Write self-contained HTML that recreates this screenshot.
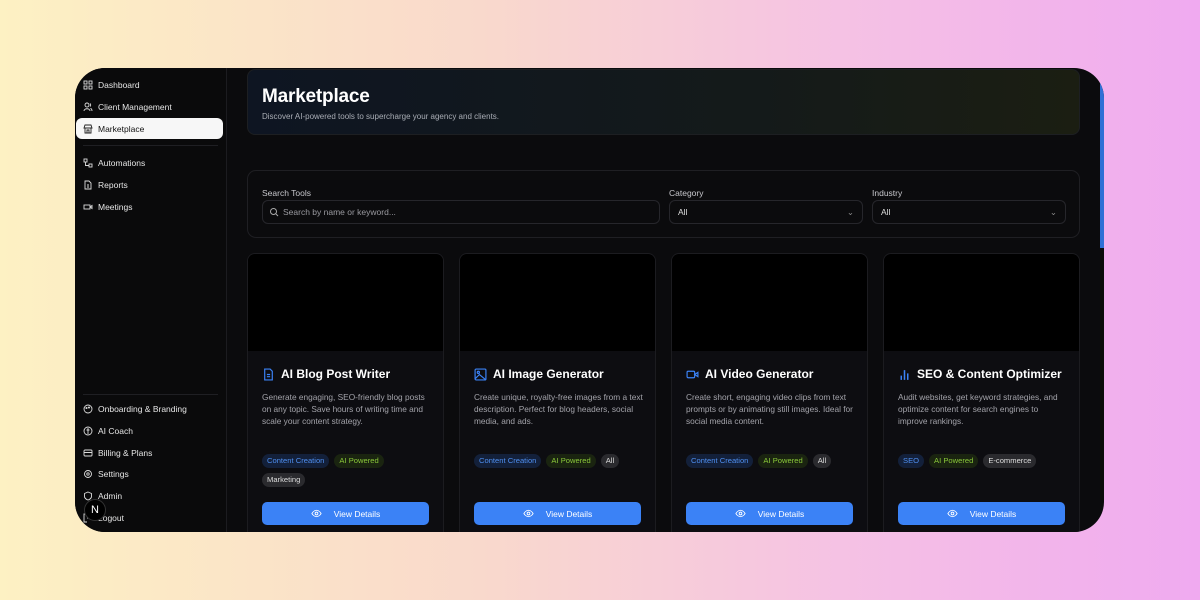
<!DOCTYPE html>
<html><head><style>
*{box-sizing:border-box;margin:0;padding:0}
body{width:1200px;height:600px;overflow:hidden;font-family:"Liberation Sans",sans-serif;background:linear-gradient(90deg,#fdf1c3 0%,#f9d9cc 40%,#f5c2e4 70%,#f0aaf0 100%);position:relative}
.win{position:absolute;left:75px;top:68px;width:1029px;height:464px;border-radius:30px;overflow:hidden;background:#0b0b0d}
.side{position:absolute;left:0;top:0;width:152px;height:464px;background:#0a0a0b;border-right:1px solid #1c1c20}
.nav{position:absolute;left:8px;font-size:8.5px;color:#e6e6e6;display:flex;align-items:center;gap:5px;height:16px}
.nav svg{width:10px;height:10px;stroke:#ddd;fill:none;stroke-width:0.9}
.act{position:absolute;left:1px;top:50px;width:147px;height:21px;background:#f7f7f7;border-radius:6px}
.sep{position:absolute;left:8px;width:135px;height:1px;background:#1f1f23}
.main{position:absolute;left:152px;top:0;right:0;height:464px}
.hdr{position:absolute;left:20px;top:1px;width:833px;height:66px;border-radius:8px;border:1px solid #1d1f22;background:linear-gradient(90deg,#0e1522,#141a1a 60%,#1b1e12)}
.hdr h1{position:absolute;left:14px;top:16px;font-size:19px;color:#fff;font-weight:bold;letter-spacing:-0.2px}
.hdr p{position:absolute;left:14px;top:42px;font-size:8px;color:#a9adb5}
.flt{position:absolute;left:20px;top:102px;width:833px;height:68px;border-radius:9px;border:1px solid #1f1f23}
.lbl{position:absolute;top:17px;font-size:8.5px;color:#c7c7cc}
.inp{position:absolute;top:29px;height:24px;border:1px solid #26262b;border-radius:6px;font-size:8.5px;color:#ddd;padding-left:8px;line-height:22px}
.card{position:absolute;top:185px;width:197px;height:290px;border:1px solid #1c1c20;border-radius:8px;background:#0d0d11;overflow:hidden}
.img{height:97px;background:#000}
.ttl{position:absolute;left:14px;top:113px;font-size:12px;font-weight:bold;color:#fff;display:flex;align-items:center;gap:6px;white-space:nowrap}
.ttl svg{width:13px;height:13px;stroke:#3b82f6;fill:none;stroke-width:1.1}
.dsc{position:absolute;left:14px;top:137px;width:171px;font-size:8.3px;line-height:12px;color:#a3a3aa}
.tags{position:absolute;left:14px;top:200px;width:160px;display:flex;flex-wrap:wrap;gap:5px 5px}
.tag{font-size:7.6px;padding:3px 5px;border-radius:8px;height:14px;line-height:8px}
.tb{background:#13203a;color:#4f8ff0}.tg{background:#1a2410;color:#8ac83a}.tw{background:#2a2a2e;color:#ddd}
.btn{position:absolute;left:14px;top:248px;width:167px;height:23px;border-radius:5px;background:#3b82f6;color:#fff;font-size:8.5px;display:flex;align-items:center;justify-content:center;gap:12px}
.btn svg{width:11px;height:11px;stroke:#fff;fill:none;stroke-width:1}
.scroll{position:absolute;right:0;top:12px;width:4px;height:168px;background:#2f6fd6}
</style></head><body>
<div class="win">
<div class="side">
<div class="act"></div>
<div class="nav" style="top:9px"><svg viewBox="0 0 10 10"><rect x="1" y="1" width="3" height="3"/><rect x="6" y="1" width="3" height="3"/><rect x="1" y="6" width="3" height="3"/><rect x="6" y="6" width="3" height="3"/></svg>Dashboard</div>
<div class="nav" style="top:31px"><svg viewBox="0 0 10 10"><circle cx="4" cy="3" r="2"/><path d="M1 9c0-3 6-3 6 0M7 1.5a2 2 0 010 3M9 9c0-2-1-2.5-1.5-2.7"/></svg>Client Management</div>
<div class="nav" style="top:53px;color:#111"><svg viewBox="0 0 10 10" style="stroke:#222"><path d="M1 4l1-3h6l1 3H1zM2 4v5h6V4M4 9V6h2v3"/></svg>Marketplace</div>
<div class="sep" style="top:77px"></div>
<div class="nav" style="top:87px"><svg viewBox="0 0 10 10"><rect x="1" y="1" width="3" height="3"/><rect x="6" y="6" width="3" height="3"/><path d="M2.5 4v3.5H6"/></svg>Automations</div>
<div class="nav" style="top:109px"><svg viewBox="0 0 10 10"><path d="M2 1h4l2 2v6H2z M4 5h2M4 7h2"/></svg>Reports</div>
<div class="nav" style="top:131px"><svg viewBox="0 0 10 10"><rect x="1" y="3" width="6" height="4"/><path d="M7 5l2-1.5v3z"/></svg>Meetings</div>
<div class="sep" style="top:326px"></div>
<div class="nav" style="top:333px"><svg viewBox="0 0 10 10"><circle cx="5" cy="5" r="4"/><circle cx="3.5" cy="4" r=".6"/><circle cx="6" cy="3.5" r=".6"/></svg>Onboarding &amp; Branding</div>
<div class="nav" style="top:355px"><svg viewBox="0 0 10 10"><circle cx="5" cy="5" r="4"/><path d="M5 2v6M3.5 4h3"/></svg>AI Coach</div>
<div class="nav" style="top:377px"><svg viewBox="0 0 10 10"><rect x="1" y="2" width="8" height="6" rx="1"/><path d="M1 4.5h8"/></svg>Billing &amp; Plans</div>
<div class="nav" style="top:398px"><svg viewBox="0 0 10 10"><circle cx="5" cy="5" r="3.5"/><circle cx="5" cy="5" r="1.2"/></svg>Settings</div>
<div class="nav" style="top:420px"><svg viewBox="0 0 10 10"><path d="M5 1l3.5 1.5v3C8.5 8 5 9 5 9S1.5 8 1.5 5.5v-3z"/></svg>Admin</div>
<div class="nav" style="top:442px"><svg viewBox="0 0 10 10"><path d="M4 1H1v8h3M4 5h5"/></svg>Logout</div>
<div style="position:absolute;left:9px;top:431px;width:22px;height:22px;border-radius:50%;background:#000;border:1px solid #333;color:#fff;font-size:11px;text-align:center;line-height:20px">N</div>
</div>
<div class="main">
<div class="hdr"><h1>Marketplace</h1><p>Discover AI-powered tools to supercharge your agency and clients.</p></div>
<div class="flt">
<div class="lbl" style="left:14px">Search Tools</div>
<div class="inp" style="left:14px;width:398px;padding-left:20px;color:#9a9aa0"><svg viewBox="0 0 10 10" style="position:absolute;left:6px;top:6px;width:10px;height:10px;stroke:#aaa;fill:none;stroke-width:1"><circle cx="4.5" cy="4.5" r="3"/><path d="M7 7l2 2"/></svg>Search by name or keyword...</div>
<div class="lbl" style="left:421px">Category</div>
<div class="inp" style="left:421px;width:194px">All<span style="position:absolute;right:8px;color:#888">⌄</span></div>
<div class="lbl" style="left:624px">Industry</div>
<div class="inp" style="left:624px;width:194px">All<span style="position:absolute;right:8px;color:#888">⌄</span></div>
</div>

<div class="card" style="left:20px"><div class="img"></div>
<div class="ttl"><svg viewBox="0 0 12 12"><path d="M2.5 1h5l2 2v8h-7z M4.5 6h3M4.5 8h3"/></svg>AI Blog Post Writer</div>
<div class="dsc">Generate engaging, SEO-friendly blog posts on any topic. Save hours of writing time and scale your content strategy.</div>
<div class="tags"><span class="tag tb">Content Creation</span><span class="tag tg">AI Powered</span><span class="tag tw">Marketing</span></div>
<div class="btn"><svg viewBox="0 0 12 12"><path d="M1 6s2-3.5 5-3.5S11 6 11 6 9 9.5 6 9.5 1 6 1 6z"/><circle cx="6" cy="6" r="1.5"/></svg>View Details</div></div>

<div class="card" style="left:232px"><div class="img"></div>
<div class="ttl"><svg viewBox="0 0 12 12"><rect x="1" y="1" width="10" height="10" rx="1"/><circle cx="4" cy="4" r="1"/><path d="M1 10l4-4 6 5"/></svg>AI Image Generator</div>
<div class="dsc">Create unique, royalty-free images from a text description. Perfect for blog headers, social media, and ads.</div>
<div class="tags"><span class="tag tb">Content Creation</span><span class="tag tg">AI Powered</span><span class="tag tw">All</span></div>
<div class="btn"><svg viewBox="0 0 12 12"><path d="M1 6s2-3.5 5-3.5S11 6 11 6 9 9.5 6 9.5 1 6 1 6z"/><circle cx="6" cy="6" r="1.5"/></svg>View Details</div></div>

<div class="card" style="left:444px"><div class="img"></div>
<div class="ttl"><svg viewBox="0 0 12 12"><rect x="1" y="3" width="7" height="6" rx="1"/><path d="M8 6l3-2v4z"/></svg>AI Video Generator</div>
<div class="dsc">Create short, engaging video clips from text prompts or by animating still images. Ideal for social media content.</div>
<div class="tags"><span class="tag tb">Content Creation</span><span class="tag tg">AI Powered</span><span class="tag tw">All</span></div>
<div class="btn"><svg viewBox="0 0 12 12"><path d="M1 6s2-3.5 5-3.5S11 6 11 6 9 9.5 6 9.5 1 6 1 6z"/><circle cx="6" cy="6" r="1.5"/></svg>View Details</div></div>

<div class="card" style="left:656px"><div class="img"></div>
<div class="ttl"><svg viewBox="0 0 12 12" style="stroke-width:1.4"><path d="M3 11V7M6 11V2M9 11V5"/></svg>SEO &amp; Content Optimizer</div>
<div class="dsc">Audit websites, get keyword strategies, and optimize content for search engines to improve rankings.</div>
<div class="tags"><span class="tag tb">SEO</span><span class="tag tg">AI Powered</span><span class="tag tw">E-commerce</span></div>
<div class="btn"><svg viewBox="0 0 12 12"><path d="M1 6s2-3.5 5-3.5S11 6 11 6 9 9.5 6 9.5 1 6 1 6z"/><circle cx="6" cy="6" r="1.5"/></svg>View Details</div></div>
<div class="scroll"></div>
</div>
</div>
</body></html>
